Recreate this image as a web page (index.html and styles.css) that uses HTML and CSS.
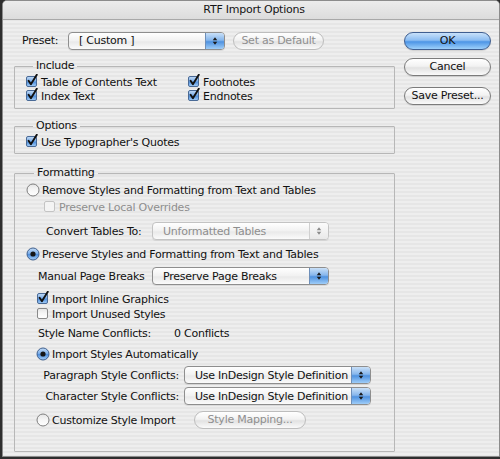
FILE: index.html
```html
<!DOCTYPE html>
<html>
<head>
<meta charset="utf-8">
<link rel="stylesheet" href="styles.css">
</head>
<body>
<svg class="defs" width="0" height="0" aria-hidden="true">
  <defs>
    <linearGradient id="gBlue" x1="0" y1="0" x2="0" y2="1">
      <stop offset="0" stop-color="#c4dcf6"/>
      <stop offset="0.45" stop-color="#7fb0ea"/>
      <stop offset="0.55" stop-color="#4f8fdc"/>
      <stop offset="1" stop-color="#a8d0f8"/>
    </linearGradient>
    <linearGradient id="gWhite" x1="0" y1="0" x2="0" y2="1">
      <stop offset="0" stop-color="#e4e4e4"/>
      <stop offset="0.5" stop-color="#f6f6f6"/>
      <stop offset="1" stop-color="#ffffff"/>
    </linearGradient>
    <symbol id="cbOn" viewBox="0 0 13 13">
      <rect x="1.5" y="2.5" width="10" height="10" rx="1.5" fill="url(#gBlue)" stroke="#4a6a96"/>
      <path d="M3.6 6.8 L5.9 10.2 L11.8 0.8" fill="none" stroke="#111" stroke-width="1.9" stroke-linecap="round" stroke-linejoin="round"/>
    </symbol>
    <symbol id="cbOff" viewBox="0 0 13 13">
      <rect x="1.5" y="2.5" width="10" height="10" rx="1.5" fill="url(#gWhite)" stroke="#8a8a8a"/>
    </symbol>
    <symbol id="cbDis" viewBox="0 0 13 13">
      <rect x="1.5" y="2.5" width="10" height="10" rx="1.5" fill="#f4f4f4" stroke="#c4c4c4"/>
    </symbol>
    <symbol id="rOn" viewBox="0 0 14 14">
      <circle cx="7" cy="7" r="6" fill="url(#gBlue)" stroke="#41618f"/>
      <circle cx="7" cy="7" r="2.6" fill="#161616"/>
    </symbol>
    <symbol id="rOff" viewBox="0 0 14 14">
      <circle cx="7" cy="7" r="6" fill="url(#gWhite)" stroke="#7e7e7e"/>
    </symbol>
    <symbol id="arrows" viewBox="0 0 8 12">
      <path d="M4 1 L7 5 L1 5 Z M4 11 L7 7 L1 7 Z"/>
    </symbol>
  </defs>
</svg>

<div class="window">
  <div class="titlebar">RTF Import Options</div>
  <div class="content">
    <div class="main">
      <div class="preset-row">
        <span class="preset-label">Preset:</span>
        <div class="popup popup-preset">
          <span class="popup-text">[ Custom ]</span>
          <span class="popup-arrow"><svg class="arr"><use href="#arrows"/></svg></span>
        </div>
        <div class="btn btn-disabled btn-default">Set as Default</div>
      </div>

      <fieldset class="group group-include">
        <legend>Include</legend>
        <div class="include-grid">
          <label class="check"><svg class="cb"><use href="#cbOn"/></svg>Table of Contents Text</label>
          <label class="check"><svg class="cb"><use href="#cbOn"/></svg>Footnotes</label>
          <label class="check"><svg class="cb"><use href="#cbOn"/></svg>Index Text</label>
          <label class="check"><svg class="cb"><use href="#cbOn"/></svg>Endnotes</label>
        </div>
      </fieldset>

      <fieldset class="group group-options">
        <legend>Options</legend>
        <label class="check"><svg class="cb"><use href="#cbOn"/></svg>Use Typographer's Quotes</label>
      </fieldset>

      <fieldset class="group group-format">
        <legend>Formatting</legend>
        <div class="rows">
          <label class="radio row r-remove"><svg class="rb"><use href="#rOff"/></svg>Remove Styles and Formatting from Text and Tables</label>
          <label class="check row disabled r-local"><svg class="cb"><use href="#cbDis"/></svg>Preserve Local Overrides</label>
          <div class="row field r-convert">
            <span class="field-label">Convert Tables To:</span>
            <div class="popup popup-disabled popup-mid">
              <span class="popup-text">Unformatted Tables</span>
              <span class="popup-arrow"><svg class="arr"><use href="#arrows"/></svg></span>
            </div>
          </div>
          <label class="radio row r-preserve"><svg class="rb"><use href="#rOn"/></svg>Preserve Styles and Formatting from Text and Tables</label>
          <div class="row field r-breaks">
            <span class="field-label">Manual Page Breaks</span>
            <div class="popup popup-mid">
              <span class="popup-text">Preserve Page Breaks</span>
              <span class="popup-arrow"><svg class="arr"><use href="#arrows"/></svg></span>
            </div>
          </div>
          <label class="check row r-inline"><svg class="cb"><use href="#cbOn"/></svg>Import Inline Graphics</label>
          <label class="check row r-unused"><svg class="cb"><use href="#cbOff"/></svg>Import Unused Styles</label>
          <div class="row field r-conflicts">
            <span class="field-label">Style Name Conflicts:</span>
            <span class="conflicts">0 Conflicts</span>
          </div>
          <label class="radio row r-auto"><svg class="rb"><use href="#rOn"/></svg>Import Styles Automatically</label>
          <div class="row field r-para">
            <span class="field-label right">Paragraph Style Conflicts:</span>
            <div class="popup popup-wide">
              <span class="popup-text">Use InDesign Style Definition</span>
              <span class="popup-arrow"><svg class="arr"><use href="#arrows"/></svg></span>
            </div>
          </div>
          <div class="row field r-char">
            <span class="field-label right">Character Style Conflicts:</span>
            <div class="popup popup-wide">
              <span class="popup-text">Use InDesign Style Definition</span>
              <span class="popup-arrow"><svg class="arr"><use href="#arrows"/></svg></span>
            </div>
          </div>
          <div class="row field r-custom">
            <label class="radio custom-radio"><svg class="rb"><use href="#rOff"/></svg>Customize Style Import</label>
            <div class="btn btn-disabled btn-mapping">Style Mapping...</div>
          </div>
        </div>
      </fieldset>
    </div>

    <div class="side">
      <div class="btn btn-ok">OK</div>
      <div class="btn btn-side btn-cancel">Cancel</div>
      <div class="btn btn-side btn-save">Save Preset...</div>
    </div>
  </div>
</div>
</body>
</html>
```

FILE: styles.css
```css
html, body {
  margin: 0;
  padding: 0;
}
body {
  width: 500px;
  height: 459px;
  background: #2e2e2e;
  font-family: "DejaVu Sans", "Liberation Sans", sans-serif;
  font-size: 11px;
  letter-spacing: -0.25px;
  color: #111;
  overflow: hidden;
}
.defs {
  position: absolute;
  width: 0;
  height: 0;
}
.window {
  width: 496px;
  height: 455px;
  margin-left: 2px;
  border: 1px solid #8c8c8c;
  border-top-left-radius: 5px;
  border-top-right-radius: 5px;
  background-color: #ededed;
  background-image: repeating-linear-gradient(to bottom, #eeeeee 0px, #eeeeee 2px, #e6e6e6 2px, #e6e6e6 4px);
  overflow: hidden;
}
.titlebar {
  height: 18px;
  line-height: 18px;
  text-align: center;
  font-size: 11px;
  color: #151515;
  background: linear-gradient(to bottom, #ececec, #dcdcdc);
  border-bottom: 1px solid #a8a8a8;
  padding-left: 6px;
}
.content {
  display: flex;
  padding-top: 11px;
  padding-left: 11px;
}
.main {
  width: 381px;
  display: flex;
  flex-direction: column;
}
.side {
  margin-left: 9px;
  width: 87px;
  display: flex;
  flex-direction: column;
}

/* preset row */
.preset-row {
  display: flex;
  align-items: center;
  height: 19px;
}
.preset-label {
  margin-left: 8px;
  width: 46px;
}
.preset-row .btn-default {
  margin-left: 8px;
}

/* popups */
.popup {
  display: flex;
  align-items: center;
  height: 16px;
  border: 1px solid #8e8e8e;
  border-radius: 4px;
  background: linear-gradient(to bottom, #ffffff 0%, #f1f1f1 50%, #e9e9e9 55%, #fbfbfb 100%);
  box-shadow: 0 1px 0 rgba(0,0,0,0.08);
  overflow: hidden;
}
.popup-text {
  flex: 1;
  padding-left: 10px;
  white-space: nowrap;
}
.popup-arrow {
  width: 18px;
  height: 16px;
  display: flex;
  align-items: center;
  justify-content: center;
  border-left: 1px solid #6e8fb9;
  background: linear-gradient(to bottom, #c9e0f8 0%, #86b6ec 45%, #4f92e0 55%, #9fcdf8 100%);
}
.arr {
  width: 6px;
  height: 10px;
  fill: #1a1a1a;
}
.popup-preset {
  width: 155px;
}
.popup-mid {
  width: 175px;
}
.popup-wide {
  width: 185px;
}
.popup-disabled {
  border-color: #c3c3c3;
  color: #8e8e8e;
}
.popup-disabled .popup-arrow {
  border-left-color: #d0d0d0;
  background: linear-gradient(to bottom, #fbfbfb, #e9e9e9);
}
.popup-disabled .arr {
  fill: #8a8a8a;
}

/* buttons */
.btn {
  height: 16px;
  line-height: 16px;
  text-align: center;
  border: 1px solid #7b7b7b;
  border-radius: 9px;
  background: linear-gradient(to bottom, #ffffff 0%, #f2f2f2 45%, #e2e2e2 55%, #fafafa 100%);
  white-space: nowrap;
  box-shadow: 0 1px 1px rgba(0,0,0,0.12);
}
.btn-disabled {
  border-color: #bdbdbd;
  color: #8f8f8f;
  box-shadow: none;
}
.btn-default {
  width: 89px;
}
.btn-ok {
  margin-top: 1px;
  border-color: #3f5e90;
  background: linear-gradient(to bottom, #c8e1fa 0%, #8cbdf2 45%, #4d95e6 55%, #9dd0fb 100%);
}
.btn-cancel {
  margin-top: 8px;
}
.btn-save {
  margin-top: 11px;
}

/* groups */
.group {
  margin: 0;
  border: 1px solid #b7b7b7;
  border-radius: 1px;
  padding: 3px 10px 4px 10px;
  box-shadow: inset 0 1px 0 rgba(0,0,0,0.03);
}
.group legend {
  padding: 0 3px;
  margin-left: 8px;
  line-height: 14px;
  height: 14px;
}
.group-include {
  margin-top: 9px;
  padding-top: 2px;
  padding-bottom: 5px;
}
.group-options {
  margin-top: 10px;
  padding-top: 2px;
  padding-bottom: 4px;
}
.group-format {
  margin-top: 12px;
  padding: 3px 10px 22px 11px;
}
.include-grid {
  display: grid;
  grid-template-columns: 162px auto;
}

.check, .radio {
  display: flex;
  align-items: center;
  height: 14px;
  white-space: nowrap;
}
.cb {
  width: 13px;
  height: 13px;
  margin-right: 3px;
  margin-top: -3px;
  flex: none;
}
.rb {
  width: 14px;
  height: 14px;
  margin-right: 2px;
  flex: none;
}
.disabled {
  color: #8e8e8e;
}

.rows {
  display: flex;
  flex-direction: column;
}
.field {
  display: flex;
  align-items: center;
  height: 18px;
  white-space: nowrap;
}
.r-local { margin-top: 3px; padding-left: 17px; }
.r-convert { margin-top: 8px; }
.r-convert .field-label { margin-left: 20px; width: 106px; }
.r-preserve { margin-top: 7px; }
.r-breaks { margin-top: 6px; }
.r-breaks .field-label { margin-left: 12px; width: 114px; }
.r-inline { margin-top: 7px; padding-left: 10px; }
.r-unused { margin-top: 1px; padding-left: 10px; }
.r-conflicts { margin-top: 4px; height: 16px; }
.r-conflicts .field-label { margin-left: 12px; width: 136px; }
.r-auto { margin-top: 6px; padding-left: 10px; }
.r-para { margin-top: 5px; }
.r-char { margin-top: 3px; }
.field-label.right {
  width: 153px;
  text-align: right;
  padding-right: 5px;
}
.r-custom { margin-top: 6px; }
.custom-radio { width: 158px; padding-left: 10px; }
.btn-mapping { width: 110px; }
```
